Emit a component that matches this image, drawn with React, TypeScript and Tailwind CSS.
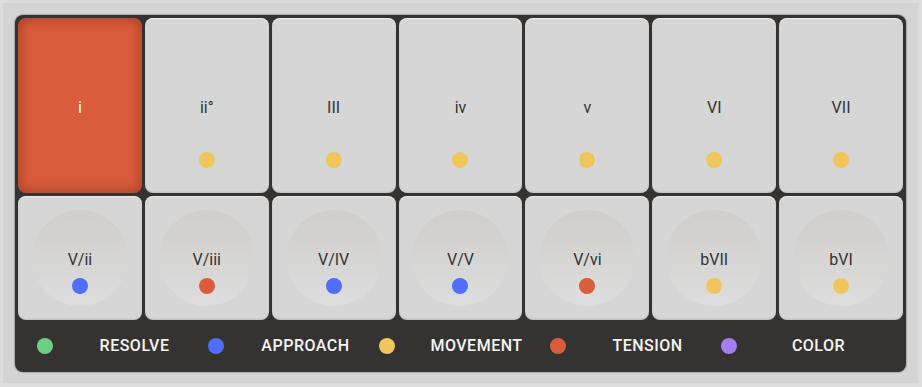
import React from 'react';

type Dot = 'yellow' | 'blue' | 'red' | 'green' | 'purple';

const dotClass: Record<Dot, string> = {
  yellow: 'bg-[#eec65c]',
  blue: 'bg-[#506ef7]',
  red: 'bg-[#d95c3c]',
  green: 'bg-[#6ccf84]',
  purple: 'bg-[#a27ef2]',
};

const diatonic: { label: string; dot?: Dot; active?: boolean }[] = [
  { label: 'i', active: true },
  { label: 'ii°', dot: 'yellow' },
  { label: 'III', dot: 'yellow' },
  { label: 'iv', dot: 'yellow' },
  { label: 'v', dot: 'yellow' },
  { label: 'VI', dot: 'yellow' },
  { label: 'VII', dot: 'yellow' },
];

const borrowed: { label: string; dot: Dot }[] = [
  { label: 'V/ii', dot: 'blue' },
  { label: 'V/iii', dot: 'red' },
  { label: 'V/IV', dot: 'blue' },
  { label: 'V/V', dot: 'blue' },
  { label: 'V/vi', dot: 'red' },
  { label: 'bVII', dot: 'yellow' },
  { label: 'bVI', dot: 'yellow' },
];

const legend: { label: string; dot: Dot }[] = [
  { label: 'RESOLVE', dot: 'green' },
  { label: 'APPROACH', dot: 'blue' },
  { label: 'MOVEMENT', dot: 'yellow' },
  { label: 'TENSION', dot: 'red' },
  { label: 'COLOR', dot: 'purple' },
];

function ChordCell({ label, dot, active }: { label: string; dot?: Dot; active?: boolean }) {
  return (
    <div
      className={
        active
          ? 'flex flex-col items-center rounded-[8px] bg-[#d95c3c] pt-[81px] shadow-[inset_0_0_14px_rgba(90,20,0,0.45)]'
          : 'flex flex-col items-center rounded-[8px] bg-[#d6d6d6] pt-[81px] shadow-[inset_0_1px_1px_rgba(255,255,255,0.6),inset_0_-1px_2px_rgba(0,0,0,0.12)]'
      }
    >
      <span className={active ? 'text-[16px] leading-[18px] text-white' : 'text-[16px] leading-[18px] text-[#333333]'}>
        {label}
      </span>
      {dot && <span className={`mt-[35px] h-4 w-4 rounded-full ${dotClass[dot]}`} />}
    </div>
  );
}

function PadCell({ label, dot }: { label: string; dot: Dot }) {
  return (
    <div className="flex items-center justify-center rounded-[8px] bg-[#d6d6d6] shadow-[inset_0_1px_1px_rgba(255,255,255,0.6),inset_0_-1px_2px_rgba(0,0,0,0.12)]">
      <div className="flex h-[96px] w-[96px] flex-col items-center rounded-full bg-gradient-to-b from-[#cfcecc] to-[#dddddd] pt-[41px]">
        <span className="text-[16px] leading-[18px] text-[#333333]">{label}</span>
        <span className={`mt-[9px] h-4 w-4 rounded-full ${dotClass[dot]}`} />
      </div>
    </div>
  );
}

export default function App() {
  return (
    <div className="h-[387px] w-[922px] bg-[#dcdcdc] p-[3px] font-['Roboto',sans-serif]">
      <div className="h-[380px] w-[915px] bg-[#d4d4d4] p-[12px]">
        <div className="flex h-[357px] w-[891px] flex-col rounded-[8px] bg-[#353331] px-[3px] pt-[3px] shadow-[0_0_1px_1px_rgba(0,0,0,0.2)]">
          <div className="grid grid-cols-7 grid-rows-[175px_124px] gap-[3px]">
            {diatonic.map((c) => (
              <ChordCell key={c.label} {...c} />
            ))}
            {borrowed.map((c) => (
              <PadCell key={c.label} {...c} />
            ))}
          </div>
          <div className="grid flex-1 grid-cols-5 items-center px-[15px]">
            {legend.map((l) => (
              <div key={l.label} className="flex items-center pl-1">
                <span className={`h-4 w-4 shrink-0 rounded-full ${dotClass[l.dot]}`} />
                <span className="ml-3 flex-1 text-center text-[16px] font-medium tracking-[0.5px] text-[#f4f4f4]">
                  {l.label}
                </span>
              </div>
            ))}
          </div>
        </div>
      </div>
    </div>
  );
}
